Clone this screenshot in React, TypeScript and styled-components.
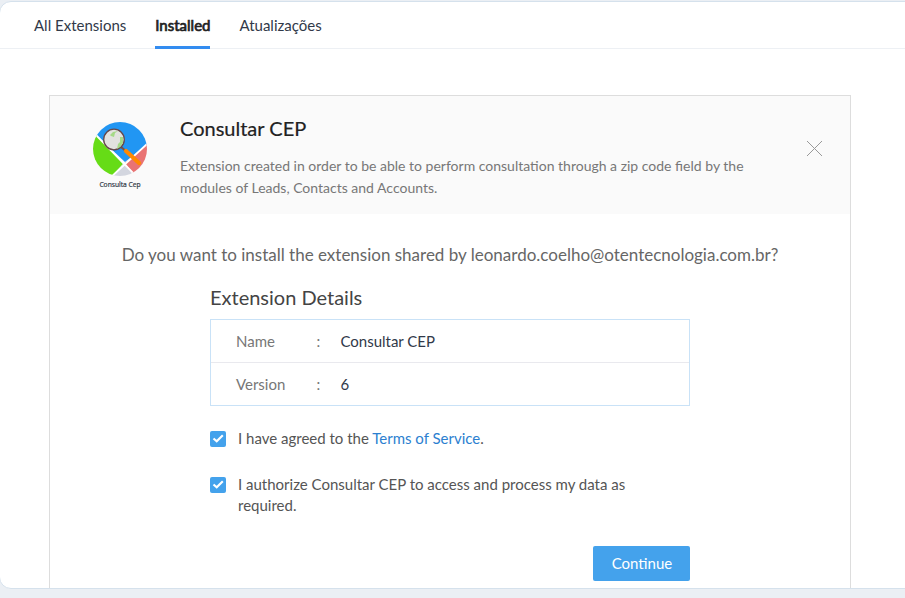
import React from "react";
import styled, { createGlobalStyle } from "styled-components";

const GlobalStyle = createGlobalStyle`
  *, *::before, *::after { box-sizing: border-box; }
  html, body { margin: 0; height: 100%; overflow: hidden; }
  body {
    background: #ebeff4;
    font-family: Lato, "Open Sans", sans-serif;
    font-size: 15px;
    color: #313949;
  }
  h1, h2, p { margin: 0; font-weight: 400; }
`;

const Panel = styled.main`
  height: 588px;
  margin: 1px -12px 0 -1px;
  background: #fff;
  border: 1px solid #d5e1ec;
  border-radius: 12px;
  overflow: hidden;
`;

const Tabs = styled.nav`
  display: flex;
  gap: 29px;
  height: 47px;
  padding-left: 34px;
  border-bottom: 1px solid #edf0f4;
`;

const Tab = styled.a<{ $active?: boolean }>`
  height: 47px;
  line-height: 46px;
  white-space: nowrap;
  color: ${(p) => (p.$active ? "#222" : "#313949")};
  border-bottom: 3px solid ${(p) => (p.$active ? "#338cf0" : "transparent")};
  border-radius: 2px 2px 0 0;
  -webkit-text-stroke: ${(p) => (p.$active ? "0.7px #222" : "0")};
`;

const Card = styled.section`
  width: 802px;
  height: 600px;
  margin: 46px 0 0 49px;
  border: 1px solid #ddd;
`;

const CardHeader = styled.header`
  display: flex;
  height: 118px;
  padding: 0 28px 0 42px;
  background: #fafafa;
`;

const Brand = styled.div`
  width: 56px;
  margin: 25px 32px 0 0;
  display: flex;
  flex-direction: column;
  align-items: center;
`;

const BrandName = styled.span`
  margin-top: 3px;
  font: 6.7px/10px "Open Sans", sans-serif;
  color: #303845;
  white-space: nowrap;
  -webkit-text-stroke: 0.2px #303845;
`;

const Intro = styled.div`
  width: 600px;
  padding-top: 19px;
`;

const Title = styled.h1`
  font-size: 20px;
  line-height: 26px;
  color: #222;
  -webkit-text-stroke: 0.2px #222;
`;

const Description = styled.p`
  margin-top: 14px;
  font-size: 14px;
  line-height: 22px;
  color: #777;
`;

const CloseButton = styled.button`
  width: 15px;
  height: 15px;
  margin: 45px 0 0 auto;
  padding: 0;
  border: 0;
  background: none;
  svg { display: block; }
`;

const Question = styled.p`
  margin-top: 29px;
  font-size: 17px;
  line-height: 24px;
  text-align: center;
  white-space: nowrap;
  color: #666;
`;

const Content = styled.div`
  width: 480px;
  margin: 17px 0 0 160px;
`;

const SectionTitle = styled.h2`
  font-size: 20px;
  line-height: 26px;
  color: #444;
`;

const Details = styled.dl`
  margin: 9px 0 0;
  border: 1px solid #c9e2f7;
`;

const DetailRow = styled.div`
  display: grid;
  grid-template-columns: 80.6px 23.8px 1fr;
  height: 42px;
  padding-left: 25px;
  line-height: 43px;
  color: #777;

  & + & {
    height: 43px;
    border-top: 1px solid #e9e9ee;
  }
`;

const Value = styled.dd`
  margin: 0;
  color: #313949;
`;

const Consent = styled.label<{ $gap: number }>`
  display: flex;
  gap: 12px;
  margin-top: ${(p) => p.$gap}px;
  line-height: 21px;
  color: #555;
`;

const Check = styled.span`
  flex: none;
  width: 16px;
  height: 16px;
  margin-top: 3px;
  border-radius: 2px;
  background: #44a2ec;
  svg { display: block; }
`;

const ConsentText = styled.span`
  width: 410px;
`;

const TermsLink = styled.a`
  color: #2c7fd0;
`;

const Continue = styled.button`
  display: block;
  width: 97px;
  height: 35px;
  margin: 30px 0 0 auto;
  padding: 0 0 0 1px;
  border: 0;
  border-radius: 2px;
  background: #44a2ec;
  color: #fff;
  font: 15px/35px Lato, sans-serif;
`;

const Logo = () => (
  <svg width="56" height="56" viewBox="0 0 56 56">
    <defs>
      <clipPath id="disc"><circle cx="28" cy="28" r="27" /></clipPath>
    </defs>
    <g clipPath="url(#disc)">
      <path d="M4 14V0H56V23L33 41Z" fill="#2196f3" />
      <path d="M0 14H4L31 43L19 56H0Z" fill="#66dc16" />
      <path d="M56 22L33 42L44 56H56Z" fill="#e97373" />
      <path d="M32 42L19 56H44Z" fill="#d3d6df" />
      <path d="M3 13L46 57M18 57L56 22" stroke="#fff" strokeWidth="1.8" />
    </g>
    <path d="M29 26L35 31" stroke="#75504c" strokeWidth="2.2" />
    <path d="M34 30L47 42" stroke="#ff8900" strokeWidth="4.2" strokeLinecap="round" />
    <circle cx="22" cy="18.5" r="10.3" fill="#e2e2df" stroke="#65484b" strokeWidth="1.3" />
    <path d="M18 14L21 11L26 10L23 12L22 16L19 15ZM28 16L31 16L31 22L28 26L25 28L26 23L28 21Z" fill="#a5d986" />
  </svg>
);

const Checkbox = () => (
  <Check>
    <svg width="16" height="16" viewBox="0 0 16 16" fill="none">
      <path d="M3.5 7.5L6.7 10.3L12.8 4.3" stroke="#fff" strokeWidth="2.2" />
    </svg>
  </Check>
);

export default function App() {
  return (
    <>
      <GlobalStyle />
      <Panel>
        <Tabs>
          <Tab>All Extensions</Tab>
          <Tab $active>Installed</Tab>
          <Tab>Atualizações</Tab>
        </Tabs>
        <Card>
          <CardHeader>
            <Brand>
              <Logo />
              <BrandName>Consulta Cep</BrandName>
            </Brand>
            <Intro>
              <Title>Consultar CEP</Title>
              <Description>
                Extension created in order to be able to perform consultation through a zip code field by the
                modules of Leads, Contacts and Accounts.
              </Description>
            </Intro>
            <CloseButton aria-label="Close">
              <svg width="15" height="15" viewBox="0 0 15 15">
                <path d="M0 0L15 15M15 0L0 15" stroke="#999" strokeWidth="1" />
              </svg>
            </CloseButton>
          </CardHeader>
          <Question>Do you want to install the extension shared by leonardo.coelho@otentecnologia.com.br?</Question>
          <Content>
            <SectionTitle>Extension Details</SectionTitle>
            <Details>
              <DetailRow><span>Name</span><span>:</span><Value>Consultar CEP</Value></DetailRow>
              <DetailRow><span>Version</span><span>:</span><Value>6</Value></DetailRow>
            </Details>
            <Consent $gap={22}>
              <Checkbox />
              <ConsentText>I have agreed to the <TermsLink>Terms of Service</TermsLink>.</ConsentText>
            </Consent>
            <Consent $gap={25}>
              <Checkbox />
              <ConsentText>I authorize Consultar CEP to access and process my data as required.</ConsentText>
            </Consent>
            <Continue>Continue</Continue>
          </Content>
        </Card>
      </Panel>
    </>
  );
}
